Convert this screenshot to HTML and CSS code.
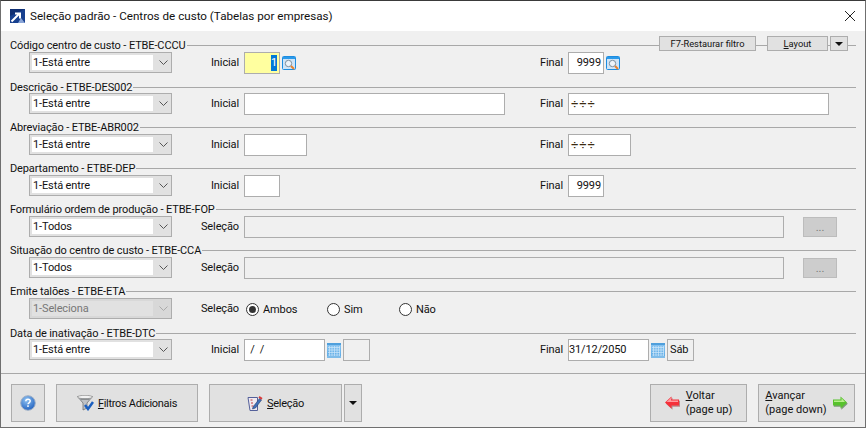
FILE: index.html
```html
<!DOCTYPE html>
<html lang="pt-BR">
<head>
<meta charset="utf-8">
<title>Seleção padrão - Centros de custo</title>
<link rel="stylesheet" href="styles.css">
</head>
<body>
<svg class="defs" width="0" height="0" aria-hidden="true">
  <defs>
    <linearGradient id="calg" x1="0" y1="0" x2="0" y2="1"><stop offset="0" stop-color="#8cc6f2"/><stop offset="1" stop-color="#5aa9e4"/></linearGradient>
    <symbol id="lookup" viewBox="0 0 14 14">
      <rect x="0.500" y="0.500" width="13" height="13" rx="1" fill="#cfe4f7" stroke="#1c8ce0"/>
      <rect x="1" y="1" width="12" height="2" fill="#2b9aea"/>
      <circle cx="6.500" cy="7.500" r="3.200" fill="#eef4fa" stroke="#7d8f9e"/>
      <path d="M9 10l3 3" stroke="#e8812c" stroke-width="2"/>
    </symbol>
    <symbol id="calendar" viewBox="0 0 14 15">
      <rect x="0" y="0" width="14" height="15" rx="1" fill="url(#calg)"/>
      <rect x="0" y="0" width="14" height="2" fill="#4f9fdc"/>
      <path d="M2.500 3v10M5 3v10M7.500 3v10M10 3v10M12.500 3v10M1 4.500h12M1 7h12M1 9.500h12M1 12h12" stroke="#cfe6f9" stroke-width="0.700"/>
      <rect x="0" y="13" width="14" height="2" fill="#7fbce9"/>
    </symbol>
  </defs>
</svg>
<main class="window">
  <header class="titlebar">
    <svg class="app-icon" viewBox="0 0 15 14" aria-hidden="true">
      <rect width="15" height="14" fill="#17408f"/>
      <path d="M0 0h15L0 7z" fill="#0f2f73"/>
      <path d="M8 14l3-5 4 5z" fill="#8aa6d8"/>
      <path d="M1.500 12.500L9 5M5 4.500h5v5" fill="none" stroke="#fff" stroke-width="2"/>
    </svg>
    <h1 class="title">Seleção padrão - Centros de custo (Tabelas por empresas)</h1>
    <svg class="close" viewBox="0 0 10 10" aria-hidden="true"><path d="M0 0l10 10M10 0L0 10" stroke="#222" stroke-width="1" fill="none"/></svg>
  </header>

  <div class="content">
    <div class="toolbar">
      <button class="btn tool tool-f7">F7-Restaurar filtro</button>
      <button class="btn tool tool-layout"><span><u>L</u>ayout</span></button>
      <button class="btn tool tool-arrow"><i class="caret"></i></button>
    </div>

    <section class="group">
      <div class="legend">Código centro de custo - ETBE-CCCU</div>
      <div class="fields">
        <div class="select"><span class="select-text">1-Está entre</span><svg class="chev" viewBox="0 0 9 5"><path d="M.5.5l4 4 4-4" fill="none" stroke="#555"/></svg></div>
        <label class="lbl">Inicial</label>
        <div class="cell"><div class="input num w36 focus"><span class="sel">1</span></div><svg class="ico"><use href="#lookup"/></svg></div>
        <label class="lbl">Final</label>
        <div class="cell"><div class="input num w36">9999</div><svg class="ico"><use href="#lookup"/></svg></div>
      </div>
    </section>

    <section class="group low">
      <div class="legend">Descrição - ETBE-DES002</div>
      <div class="fields">
        <div class="select"><span class="select-text">1-Está entre</span><svg class="chev" viewBox="0 0 9 5"><path d="M.5.5l4 4 4-4" fill="none" stroke="#555"/></svg></div>
        <label class="lbl">Inicial</label>
        <div class="cell"><div class="input w261"></div></div>
        <label class="lbl">Final</label>
        <div class="cell"><div class="input w261 ddd">÷÷÷</div></div>
      </div>
    </section>

    <section class="group">
      <div class="legend">Abreviação - ETBE-ABR002</div>
      <div class="fields">
        <div class="select"><span class="select-text">1-Está entre</span><svg class="chev" viewBox="0 0 9 5"><path d="M.5.5l4 4 4-4" fill="none" stroke="#555"/></svg></div>
        <label class="lbl">Inicial</label>
        <div class="cell"><div class="input w63"></div></div>
        <label class="lbl">Final</label>
        <div class="cell"><div class="input w63 ddd">÷÷÷</div></div>
      </div>
    </section>

    <section class="group">
      <div class="legend">Departamento - ETBE-DEP</div>
      <div class="fields">
        <div class="select"><span class="select-text">1-Está entre</span><svg class="chev" viewBox="0 0 9 5"><path d="M.5.5l4 4 4-4" fill="none" stroke="#555"/></svg></div>
        <label class="lbl">Inicial</label>
        <div class="cell"><div class="input w36"></div></div>
        <label class="lbl">Final</label>
        <div class="cell"><div class="input num w36">9999</div></div>
      </div>
    </section>

    <section class="group">
      <div class="legend">Formulário ordem de produção - ETBE-FOP</div>
      <div class="fields">
        <div class="select"><span class="select-text">1-Todos</span><svg class="chev" viewBox="0 0 9 5"><path d="M.5.5l4 4 4-4" fill="none" stroke="#555"/></svg></div>
        <label class="lbl">Seleção</label>
        <div class="cell wide"><div class="input disabled w540"></div><button class="btn dots" disabled>...</button></div>
      </div>
    </section>

    <section class="group">
      <div class="legend">Situação do centro de custo - ETBE-CCA</div>
      <div class="fields">
        <div class="select"><span class="select-text">1-Todos</span><svg class="chev" viewBox="0 0 9 5"><path d="M.5.5l4 4 4-4" fill="none" stroke="#555"/></svg></div>
        <label class="lbl">Seleção</label>
        <div class="cell wide"><div class="input disabled w540"></div><button class="btn dots" disabled>...</button></div>
      </div>
    </section>

    <section class="group">
      <div class="legend">Emite talões - ETBE-ETA</div>
      <div class="fields">
        <div class="select off"><span class="select-text">1-Seleciona</span><svg class="chev" viewBox="0 0 9 5"><path d="M.5.5l4 4 4-4" fill="none" stroke="#aaa"/></svg></div>
        <label class="lbl">Seleção</label>
        <div class="cell wide radios">
          <span class="radio r-ambos"><i class="dot on"></i>Ambos</span>
          <span class="radio r-sim"><i class="dot"></i>Sim</span>
          <span class="radio"><i class="dot"></i>Não</span>
        </div>
      </div>
    </section>

    <section class="group low">
      <div class="legend">Data de inativação - ETBE-DTC</div>
      <div class="fields">
        <div class="select"><span class="select-text">1-Está entre</span><svg class="chev" viewBox="0 0 9 5"><path d="M.5.5l4 4 4-4" fill="none" stroke="#555"/></svg></div>
        <label class="lbl">Inicial</label>
        <div class="cell"><div class="input w81 date">&nbsp;&nbsp;/&nbsp;&nbsp;/</div><svg class="ico cal"><use href="#calendar"/></svg><div class="day"></div></div>
        <label class="lbl">Final</label>
        <div class="cell"><div class="input w81 date">31/12/2050</div><svg class="ico cal"><use href="#calendar"/></svg><div class="day">Sáb</div></div>
      </div>
    </section>
  </div>

  <footer class="footer">
    <button class="btn fb help" aria-label="Ajuda">
      <svg width="16" height="16" viewBox="0 0 16 16" aria-hidden="true">
        <defs><radialGradient id="hg" cx="40%" cy="30%" r="75%"><stop offset="0" stop-color="#8fc2f2"/><stop offset="1" stop-color="#1f5fbe"/></radialGradient></defs>
        <circle cx="8" cy="8" r="7.300" fill="url(#hg)" stroke="#9fb0c6"/>
        <path d="M5.800 6.300c0-2.800 4.400-2.800 4.400-.2 0 1.700-2.200 1.600-2.200 3.100" fill="none" stroke="#fff" stroke-width="1.500"/>
        <rect x="7.200" y="10.300" width="1.600" height="1.600" fill="#fff"/>
      </svg>
    </button>
    <button class="btn fb filtros">
      <svg width="17" height="16" viewBox="0 0 17 16" aria-hidden="true">
        <path d="M0.500 1.500h15l-5.500 6.500v5l-4 2V8z" fill="#bfc2c6" stroke="#6f7275" stroke-width=".8"/>
        <ellipse cx="8" cy="2" rx="7.500" ry="1.700" fill="#f2f2f2" stroke="#8a8a8a" stroke-width=".7"/>
        <path d="M3 3.500h10l-1 1.500H4z" fill="#8a8d90"/>
        <path d="M8 10l3 4 5-7" fill="none" stroke="#1a5fc0" stroke-width="2.500"/>
      </svg>
      <span class="tight"><u>F</u>iltros Adicionais</span>
    </button>
    <button class="btn fb selecao">
      <svg width="16" height="16" viewBox="0 0 16 16" aria-hidden="true">
        <path d="M1 2.500h9.500v13H3z" fill="#efeaf1" stroke="#54609a"/>
        <path d="M3.500 5h2M4 8h2M4.500 11h2" stroke="#c03a3a"/>
        <path d="M6 12l6.500-8.500 2 1.500L8.500 13l-3 1z" fill="#3f6fb8" stroke="#2a3f70" stroke-width=".6"/>
        <path d="M12.500 1l3 2-1 1.800-3-2z" fill="#d83a3a"/>
      </svg>
      <span class="tight"><u>S</u>eleção</span>
    </button>
    <button class="btn fb more"><i class="caret"></i></button>
    <div class="spacer"></div>
    <button class="btn fb nav voltar">
      <svg width="15" height="14" viewBox="0 0 15 14" aria-hidden="true">
        <path d="M0.500 7L7 1v3h7.500v6H7v3z" fill="#b9888a" transform="translate(.5 .7)"/>
        <path d="M0 6.500L6.500 .5v3H14v6H6.500v3z" fill="#f5303a"/>
        <path d="M1.500 6L6 1.800V4.500h7V6z" fill="#ff9aa0"/>
      </svg>
      <span class="nav-text"><span><u>V</u>oltar</span><span>(page up)</span></span>
    </button>
    <button class="btn fb nav avancar">
      <span class="nav-text"><span><u>A</u>vançar</span><span>(page down)</span></span>
      <svg width="15" height="14" viewBox="0 0 15 14" aria-hidden="true">
        <path d="M14.500 7L8 1v3H.5v6H8v3z" fill="#7d9a78" transform="translate(.3 .7)"/>
        <path d="M14 6.500L7.500 .5v3H0v6h7.500v3z" fill="#57c22c"/>
        <path d="M1 4.500h7.500V2l3.500 4H1z" fill="#b7f08a"/>
      </svg>
    </button>
  </footer>
</main>
</body>
</html>
```

FILE: styles.css
```css
* { box-sizing: border-box; }
html, body { margin: 0; height: 100%; }
body {
  width: 866px;
  height: 428px;
  overflow: hidden;
  font-family: Roboto, "Open Sans", sans-serif;
  font-size: 11px;
  letter-spacing: -0.12px;
  color: #111;
  background: #f0f0f0;
}
.defs { position: absolute; }
.window {
  width: 866px;
  height: 428px;
  display: flex;
  flex-direction: column;
  border: 1px solid #6f6f6f;
  border-top-color: #3a3a3a;
  background: #f0f0f0;
  position: relative;
}
.titlebar {
  height: 30px;
  flex: none;
  background: #fff;
  display: flex;
  align-items: center;
  padding: 0 10px 0 9px;
}
.app-icon { width: 15px; height: 14px; margin-right: 5px; }
.title { font-size: 11.650px; letter-spacing: 0; font-weight: 400; margin: 0; flex: 1; white-space: nowrap; }
.close { width: 10px; height: 10px; margin-top: -1px; }

.content {
  position: relative;
  height: 343px;
  flex: none;
  padding: 7px 9px 0 9px;
  border-bottom: 1px solid #a8a8a8;
}
.toolbar {
  position: absolute;
  top: 5px;
  left: 658px;
  display: flex;
}
.btn {
  font: inherit;
  letter-spacing: inherit;
  color: inherit;
  background: #e1e1e1;
  border: 1px solid #adadad;
  padding: 0;
  display: flex;
  align-items: center;
  justify-content: center;
}
.tool { height: 15px; font-size: 9.300px; letter-spacing: 0; }
.tool-f7 { width: 97px; margin-right: 11px; }
.tool-layout { width: 61px; margin-right: 2px; }
.tool-arrow { width: 18px; }
.caret {
  display: block;
  width: 0;
  height: 0;
  border-left: 4px solid transparent;
  border-right: 4px solid transparent;
  border-top: 4px solid #111;
}

.group { height: 41px; flex: none; }
.legend {
  height: 14px;
  display: flex;
  align-items: center;
  white-space: nowrap;
}
.legend::after {
  content: "";
  flex: 1;
  height: 1px;
  background: #a8a8a8;
  margin-left: 1px;
}
.low .legend { padding-top: 2px; }
.fields {
  display: grid;
  grid-template-columns: 143px 67px 301px 23px auto;
  align-items: start;
  padding-left: 19px;
  height: 22px;
}
.select {
  height: 21px;
  background: #e1e1e1;
  border: 1px solid #adadad;
  padding: 2px 0 2px 2px;
  display: flex;
  align-items: stretch;
}
.select-text {
  width: 121px;
  background: #fff;
  padding-left: 1px;
  line-height: 16px;
}
.chev { width: 9px; height: 5px; margin: 5px 0 0 6px; }
.select.off .select-text { background: #e1e1e1; color: #777; }
.select.off { background: #d8d8d8; }
.lbl { text-align: right; white-space: nowrap; line-height: 22px; }
.cell { display: flex; align-items: center; margin-left: 5px; height: 22px; }
.cell.wide { grid-column: 3 / -1; }
.input {
  height: 22px;
  background: #fff;
  border: 1px solid #adadad;
  flex: none;
  padding: 2px;
  line-height: 16px;
  white-space: nowrap;
}
.num { text-align: right; }
.w36 { width: 36px; }
.w63 { width: 63px; }
.w81 { width: 81px; }
.w261 { width: 261px; }
.w540 { width: 540px; }
.date { padding: 2px 0; }
.focus { background: #ffff9f; }
.sel { background: #0078d7; color: #fff; display: inline-block; width: 6px; text-align: center; }
.ddd { color: #3a2a10; font-size: 13px; letter-spacing: 0.800px; }
.disabled { background: #f0f0f0; }
.ico { width: 14px; height: 14px; margin-left: 2px; flex: none; }
.cal { width: 14px; height: 15px; margin: 0 2px; }
.day {
  width: 27px;
  height: 22px;
  border: 1px solid #adadad;
  line-height: 20px;
  padding-left: 2px;
}
.dots {
  width: 34px;
  height: 20px;
  margin-left: 19px;
  color: #777;
  background: #cdcdcd;
  border-color: #bcbcbc;
}
.radios { height: 22px; padding-left: 2px; }
.radio { display: flex; align-items: center; white-space: nowrap; }
.r-ambos { width: 81px; }
.r-sim { width: 72px; }
.dot {
  width: 13px;
  height: 13px;
  border: 1px solid #333;
  border-radius: 50%;
  background: #fff;
  margin-right: 4px;
  display: flex;
  align-items: center;
  justify-content: center;
}
.dot.on::after {
  content: "";
  width: 7px;
  height: 7px;
  border-radius: 50%;
  background: #333;
}

.footer {
  flex: 1;
  display: flex;
  align-items: flex-start;
  padding: 10px 10px 0 10px;
}
.fb { height: 38px; flex: none; gap: 4px; }
.help { width: 34px; margin-right: 11px; }
.filtros { width: 142px; margin-right: 11px; }
.selecao { width: 133px; margin-right: 2px; }
.tight { letter-spacing: -0.3px; }
.more { width: 18px; }
.spacer { flex: 1; }
.nav { width: 97px; gap: 6px; }
.voltar { margin-right: 11px; }
.nav-text { display: flex; flex-direction: column; line-height: 14px; text-align: left; letter-spacing: 0; }
```
